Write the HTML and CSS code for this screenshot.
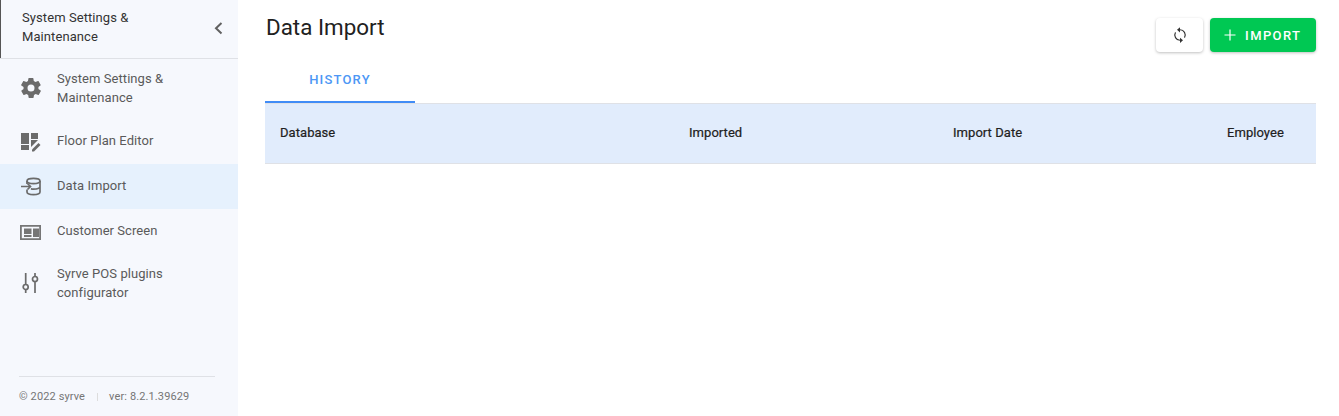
FILE: index.html
```html
<!DOCTYPE html>
<html lang="en">
<head>
    <meta charset="UTF-8">
    <meta name="viewport" content="width=device-width, initial-scale=1.0">
    <title>Data Import</title>
    <link rel="stylesheet" href="styles.css">
</head>
<body>
    <aside class="sidebar">
        <div class="sidebar-head">
            <span class="sidebar-title">System Settings &amp; Maintenance</span>
            <svg class="collapse" width="24" height="24" viewBox="0 0 24 24"><path d="M15.500 8 10 13.200l5.500 5.200" fill="none" stroke="#616161" stroke-width="2"/></svg>
        </div>
        <nav class="menu">
            <a class="menu-item tall">
                <svg class="menu-icon" width="24" height="24" viewBox="0 0 24 24"><path d="M19.400 13c0-.3.1-.6.1-1s0-.7-.1-1l2.100-1.600c.2-.2.2-.4.1-.6l-2-3.500c-.1-.2-.4-.3-.6-.2l-2.500 1c-.5-.4-1.100-.7-1.700-1l-.4-2.600c0-.2-.2-.4-.5-.4h-4c-.3 0-.5.2-.5.4l-.4 2.600c-.6.3-1.200.6-1.700 1l-2.500-1c-.2-.1-.5 0-.6.2l-2 3.500c-.1.2-.1.4.1.6L4.600 11c0 .3-.1.7-.1 1s0 .7.1 1l-2.100 1.600c-.2.2-.2.4-.1.6l2 3.500c.1.2.4.3.6.2l2.500-1c.5.4 1.100.7 1.700 1l.4 2.600c0 .2.2.4.500.4h4c.3 0 .5-.2.5-.4l.4-2.600c.6-.3 1.200-.6 1.700-1l2.500 1c.2.1.5 0 .6-.2l2-3.500c.1-.2.1-.4-.1-.6zM12 15.500a3.500 3.500 0 1 1 0-7 3.500 3.500 0 0 1 0 7z" fill="#6b6b6b"/></svg>
                <span>System Settings &amp; Maintenance</span>
            </a>
            <a class="menu-item">
                <svg class="menu-icon" width="24" height="24" viewBox="0 0 24 24"><path d="M2 4h8v11H2zM2 16h8v5H2zM12 4h7v6h-7zM12 11h7l-7 7z" fill="#6b6b6b"/><path d="M13 22.500v-2l6.500-6.500 2 2-6.500 6.500z" fill="#6b6b6b"/></svg>
                <span>Floor Plan Editor</span>
            </a>
            <a class="menu-item active">
                <svg class="menu-icon" width="24" height="24" viewBox="0 0 24 24" fill="none" stroke="#6b6b6b" stroke-width="1.700"><ellipse cx="14.500" cy="7" rx="6.500" ry="2.600"/><path d="M8 7v3M21 7v11c0 1.500-2.900 2.600-6.500 2.600S8 19.500 8 18v-2.500M21 12.500c0 1.500-2.900 2.600-6.500 2.600-.9 0-1.800-.1-2.600-.2"/><path d="M2 12.500h9.500M8.500 9.500l3 3-3 3"/></svg>
                <span>Data Import</span>
            </a>
            <a class="menu-item">
                <svg class="menu-icon" width="24" height="24" viewBox="0 0 24 24"><path fill-rule="evenodd" d="M1 6h21v15H1zM2.800 7.800v11.400h17.400V7.800z" fill="#767676"/><path d="M5 9.500h7.500V15H5zM14 9.500h6V18h-6zM5 16h7.500v2H5z" fill="#767676"/></svg>
                <span>Customer Screen</span>
            </a>
            <a class="menu-item tall">
                <svg class="menu-icon" width="24" height="24" viewBox="0 0 24 24" fill="none" stroke="#6b6b6b" stroke-width="1.700"><path d="M6.700 2v11.500M6.700 18.500V22M16 2v3.500M16 10.500V22"/><circle cx="6.700" cy="16" r="2.500"/><circle cx="16" cy="8" r="2.500"/></svg>
                <span>Syrve POS plugins configurator</span>
            </a>
        </nav>
        <footer class="sidebar-foot">
            <span>© 2022 syrve</span>
            <i class="foot-sep"></i>
            <span>ver: 8.2.1.39629</span>
        </footer>
    </aside>

    <main class="content">
        <header class="page-head">
            <h1>Data Import</h1>
            <div class="actions">
                <button class="btn-refresh" type="button">
                    <svg width="18" height="18" viewBox="0 0 24 24"><path d="M12 5a7 7 0 0 1 6 10.500M12 19a7 7 0 0 1-6-10.500" fill="none" stroke="#333" stroke-width="1.500"/><path d="M12 1.500 8 5l4 3.500zM12 15.500 16 19l-4 3.500z" fill="#333"/></svg>
                </button>
                <button class="btn-import" type="button">
                    <svg width="14" height="14" viewBox="0 0 14 14"><path d="M7 1.500v11M1.500 7h11" stroke="#fff" stroke-width="1.200" fill="none"/></svg>
                    IMPORT
                </button>
            </div>
        </header>
        <div class="tabs">
            <a class="tab">HISTORY</a>
        </div>
        <div class="table-head">
            <span class="col-db">Database</span>
            <span class="col-imported">Imported</span>
            <span class="col-date">Import Date</span>
            <span class="col-emp">Employee</span>
        </div>
    </main>
</body>
</html>
```

FILE: styles.css
```css
* {
    box-sizing: border-box;
}
html, body {
    height: 100%;
}
body {
    margin: 0;
    display: flex;
    height: 416px;
    overflow: hidden;
    font-family: Roboto, "Liberation Sans", sans-serif;
    background-color: #fff;
    color: #212121;
}
.sidebar {
    width: 238px;
    flex-shrink: 0;
    display: flex;
    flex-direction: column;
    background-color: #f6f8fd;
}
.sidebar-head {
    height: 59px;
    display: flex;
    align-items: center;
    justify-content: space-between;
    padding: 0 8px 4px 22px;
    border-bottom: 1px solid #dfe1e6;
    box-shadow: inset 1px 0 0 #555;
}
.sidebar-title {
    width: 135px;
    font-size: 13px;
    line-height: 19px;
    letter-spacing: 0.08px;
    color: #333;
}
.collapse {
    display: block;
}
.menu {
    flex: 1;
}
.menu-item {
    height: 45px;
    display: flex;
    align-items: center;
    padding: 0 0 2px 19px;
    font-size: 13px;
    line-height: 19px;
    letter-spacing: 0.06px;
    color: #5a5a5a;
}
.menu-item.tall {
    height: 60px;
}
.menu-item.active {
    background-color: #e6f1fd;
}
.menu-item span {
    width: 125px;
}
.menu-icon {
    flex-shrink: 0;
    margin-right: 14px;
}
.sidebar-foot {
    margin: 0 23px 0 19px;
    height: 40px;
    display: flex;
    align-items: center;
    border-top: 1px solid #dfe1e6;
    font-size: 11px;
    letter-spacing: 0.12px;
    color: #757575;
}
.foot-sep {
    width: 1px;
    height: 8px;
    margin: 0 11px 0 12px;
    background-color: #ddd;
}
.content {
    flex: 1;
    padding: 0 23px 0 27px;
}
.page-head {
    height: 61px;
    display: flex;
    justify-content: space-between;
}
h1 {
    margin: 12px 0 0 1px;
    font-size: 22.400px;
    font-weight: 400;
    line-height: 30px;
    color: #212121;
}
.actions {
    display: flex;
    gap: 7px;
    padding-top: 18px;
}
button {
    height: 34px;
    border: none;
    border-radius: 4px;
    box-shadow: 0 1px 3px rgba(0, 0, 0, 0.25);
    cursor: pointer;
}
.btn-refresh {
    width: 47px;
    display: flex;
    align-items: center;
    justify-content: center;
    background-color: #fff;
}
.btn-import {
    width: 106px;
    display: flex;
    align-items: center;
    justify-content: center;
    gap: 8.500px;
    padding: 0 2px 0 0;
    background-color: #00c853;
    color: #fff;
    font-family: inherit;
    font-size: 13px;
    font-weight: 500;
    letter-spacing: 1.400px;
}
.tabs {
    height: 43px;
    border-bottom: 1px solid #dfe1e6;
}
.tab {
    display: block;
    width: 150px;
    height: 42px;
    line-height: 38px;
    text-align: center;
    border-bottom: 2px solid #418cf6;
    color: #4d97f5;
    font-size: 13px;
    font-weight: 500;
    letter-spacing: 1.200px;
}
.table-head {
    height: 60px;
    display: flex;
    align-items: center;
    padding: 0 32px 2px 15px;
    background-color: #e1ecfc;
    border-bottom: 1px solid #dfe1e6;
    font-size: 13px;
    font-weight: 400;
    -webkit-text-stroke: 0.2px #212121;
    letter-spacing: 0.05px;
    color: #212121;
}
.col-db {
    width: 409px;
}
.col-imported {
    width: 264px;
}
.col-date {
    width: 274px;
}
```
